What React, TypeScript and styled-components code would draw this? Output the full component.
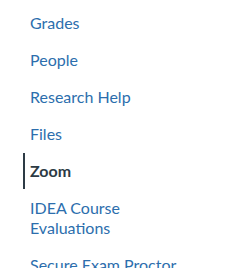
import React, { FunctionComponent } from "react";
import styled, { createGlobalStyle } from "styled-components";

const GlobalStyle = createGlobalStyle`
  html, body {
    margin: 0;
    padding: 0;
    background: #ffffff;
  }
  body {
    font-family: Lato, "Liberation Sans", sans-serif;
  }
`;

const NavList = styled.ul`
  list-style: none;
  margin: 0;
  padding: 5px 0 0 23px;
  width: 210px;
`;

const NavItem = styled.li`
  margin: 0 0 1px 0;
`;

const NavLink = styled.a<{ $active?: boolean }>`
  display: block;
  padding: 8px 6px 8px 5px;
  border-left: 2px solid ${(p) => (p.$active ? "#2d3b45" : "transparent")};
  font-size: 16px;
  line-height: 20px;
  font-weight: ${(p) => (p.$active ? 700 : 400)};
  color: ${(p) => (p.$active ? "#2d3b45" : "#2c6ead")};
  text-decoration: none;
  width: 160px;
`;

const tabs = [
  "Grades",
  "People",
  "Research Help",
  "Files",
  "Zoom",
  "IDEA Course Evaluations",
  "Secure Exam Proctor",
];

const App: FunctionComponent = () => {
  return (
    <>
      <GlobalStyle />
      <NavList>
        {tabs.map((t) => (
          <NavItem key={t}>
            <NavLink href="#" $active={t === "Zoom"}>
              {t}
            </NavLink>
          </NavItem>
        ))}
      </NavList>
    </>
  );
};

export default App;
